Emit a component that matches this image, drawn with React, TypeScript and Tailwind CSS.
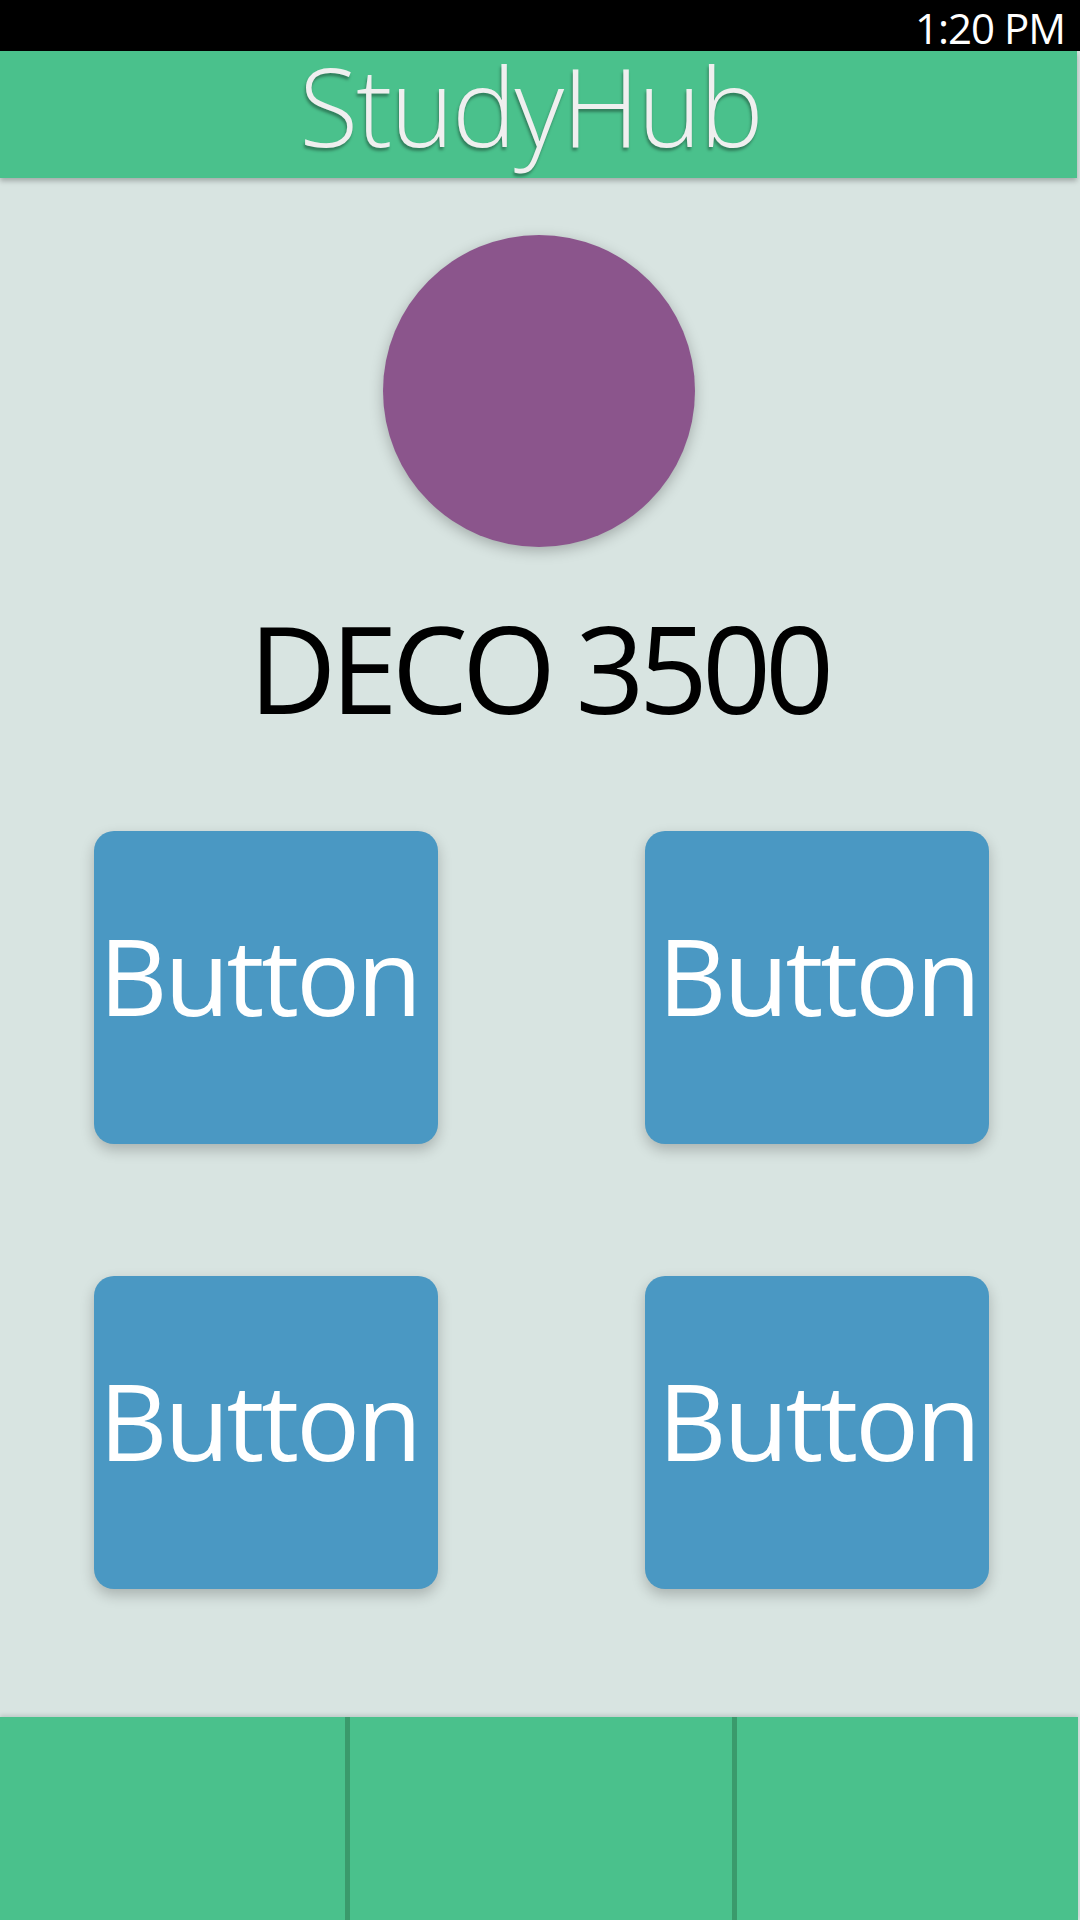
const font = { fontFamily: '"Open Sans", "Liberation Sans", sans-serif' };

function Tile({ label, left }: { label: string; left?: boolean }) {
  return (
    <button
      className={
        left
          ? "flex h-[313px] w-[344px] items-center justify-center rounded-[20px] bg-[#4a98c3] pr-[14px] pb-[26px] text-[106px] leading-none tracking-[-3px] text-white shadow-[0_6px_14px_rgba(0,0,0,0.22)]"
          : "flex h-[313px] w-[344px] items-center justify-center rounded-[20px] bg-[#4a98c3] pl-[2px] pb-[26px] text-[106px] leading-none tracking-[-3px] text-white shadow-[0_6px_14px_rgba(0,0,0,0.22)]"
      }
    >
      {label}
    </button>
  );
}

export default function App() {
  return (
    <div className="flex h-[1920px] w-[1080px] flex-col overflow-hidden bg-[#d8e4e1]" style={font}>
      <div className="flex h-[51px] items-start justify-end bg-black pt-[7px] pr-[15px] text-[42px] leading-none tracking-[-1px] text-white">
        <span>1:20 PM</span>
      </div>

      <header className="relative z-10 flex h-[127px] w-[1077px] items-center justify-center bg-[#4ac18c] pr-[16px] pb-[17px] shadow-[0_3px_5px_rgba(0,0,0,0.25)]">
        <h1 className="text-[108px] leading-none font-light tracking-[-2px] text-[#efefef] [text-shadow:-1px_3px_3px_rgba(0,0,0,0.35)]">
          StudyHub
        </h1>
      </header>

      <main className="flex w-[1077px] flex-1 flex-col items-center">
        <div className="mt-[57px] h-[312px] w-[312px] rounded-full bg-[#8b558c] shadow-[0_4px_14px_rgba(0,0,0,0.25)]" />
        <h2 className="mt-[60px] text-[121px] leading-none tracking-[-6px] text-black">DECO 3500</h2>
        <div className="mt-[103px] ml-[6px] grid grid-cols-[344px_344px] gap-x-[207px] gap-y-[132px]">
          <Tile label="Button" left />
          <Tile label="Button" />
          <Tile label="Button" left />
          <Tile label="Button" />
        </div>
      </main>

      <nav className="relative z-10 grid h-[203px] w-[1078px] grid-cols-[345px_5px_382px_5px_1fr] bg-[#4ac18c] shadow-[0_-2px_4px_rgba(0,0,0,0.12)]">
        <div />
        <div className="bg-[#3a9a6c]" />
        <div />
        <div className="bg-[#3a9a6c]" />
        <div />
      </nav>
    </div>
  );
}
